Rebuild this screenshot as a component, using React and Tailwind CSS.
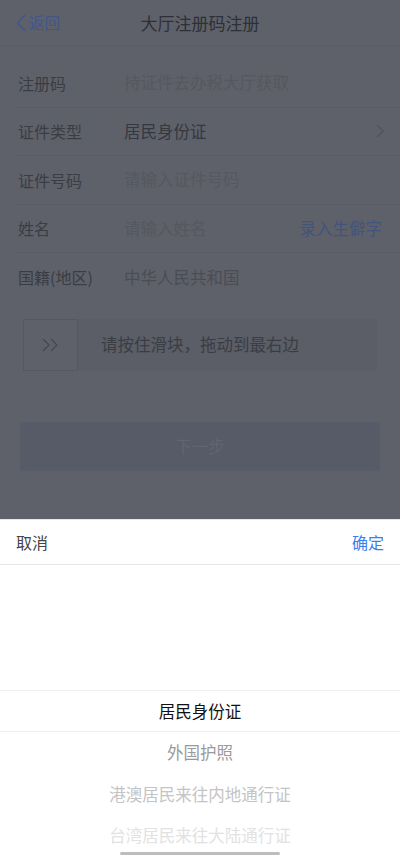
import React from "react";

const FONT = { fontFamily: '"Noto Sans CJK SC", "Noto Sans", sans-serif' };

const ROWS = [
  { label: "注册码", placeholder: "持证件去办税大厅获取" },
  { label: "证件类型", value: "居民身份证", arrow: true },
  { label: "证件号码", placeholder: "请输入证件号码" },
  { label: "姓名", placeholder: "请输入姓名", action: "录入生僻字" },
  { label: "国籍(地区)", value: "中华人民共和国", muted: true },
];

const OPTIONS = [
  { text: "外国护照", className: "text-[#9a9a9a]" },
  { text: "港澳居民来往内地通行证", className: "text-[#c4c4c4]" },
  { text: "台湾居民来往大陆通行证", className: "text-[#e2e2e2]" },
];

function FormRow({ row }) {
  return (
    <div className="flex items-center h-[48.5px] ml-4 pr-[18px] border-b border-[#585b63] last:border-b-0">
      <div className="w-[108px] pl-[2px] text-[16px] text-[#3a3d44]">{row.label}</div>
      <div
        className={`flex-1 text-[16.5px] ${
          row.placeholder ? "text-[#55585f]" : row.muted ? "text-[#4a4d54]" : "text-[#35383f]"
        }`}
      >
        {row.placeholder || row.value}
      </div>
      {row.action && <div className="text-[16.5px] text-[#43547c]">{row.action}</div>}
      {row.arrow && (
        <svg width="8" height="14" viewBox="0 0 8 14" className="mr-[-2px]">
          <path d="M1 1l6 6-6 6" fill="none" stroke="#50535b" strokeWidth="1.4" />
        </svg>
      )}
    </div>
  );
}

export default function App() {
  return (
    <div className="w-[400px] h-[856px] flex flex-col overflow-hidden bg-white" style={FONT}>
      {/* dimmed page behind the sheet */}
      <div className="h-[519px] shrink-0 bg-[#5e616a] flex flex-col">
        <div className="relative h-[46px] flex items-center justify-center border-b border-[#595c64]">
          <div className="absolute left-[16px] top-0 h-full flex items-center gap-[3px] text-[#42568a]">
            <svg width="10" height="18" viewBox="0 0 10 18">
              <path d="M9 1L1.5 9 9 17" fill="none" stroke="#42568a" strokeWidth="1.6" />
            </svg>
            <span className="text-[15.5px]">返回</span>
          </div>
          <div className="text-[17px] text-[#2d3036]">大厅注册码注册</div>
        </div>

        <div className="mt-[13px]">
          {ROWS.map((row) => (
            <FormRow key={row.label} row={row} />
          ))}
        </div>

        <div className="mx-[23px] mt-[17px] h-[52px] flex items-center bg-[#5b5e66]">
          <div className="w-[55px] h-full flex items-center justify-center border border-[#555860] bg-[#5e616a]">
            <svg width="20" height="14" viewBox="0 0 20 14">
              <path d="M2 1l6 6-6 6M10 1l6 6-6 6" fill="none" stroke="#44474e" strokeWidth="1.2" />
            </svg>
          </div>
          <div className="ml-[23px] text-[16.5px] text-[#3a3d44]">请按住滑块，拖动到最右边</div>
        </div>

        <div className="mx-[20px] mt-[51px] h-[49px] rounded-[4px] bg-[#565b67] flex items-center justify-center">
          <span className="text-[16.5px] text-[#60656f]">下一步</span>
        </div>
      </div>

      {/* bottom picker sheet */}
      <div className="relative flex-1 min-h-0 flex flex-col bg-white border-t border-[#e3e5ea]">
        <div className="h-[45px] shrink-0 flex items-center justify-between px-4 border-b border-[#e6e6e6]">
          <span className="text-[16px] text-[#444]">取消</span>
          <span className="text-[16px] text-[#3c7ef0]">确定</span>
        </div>
        <div className="h-[125px] shrink-0" />
        <div className="h-[42px] shrink-0 flex items-center justify-center border-t border-b border-[#eeeeee]">
          <span className="text-[16.5px] text-[#111]">居民身份证</span>
        </div>
        {OPTIONS.map((opt) => (
          <div key={opt.text} className="h-[41.5px] shrink-0 flex items-center justify-center">
            <span className={`text-[16.5px] ${opt.className}`}>{opt.text}</span>
          </div>
        ))}
        {/* home indicator */}
        <div className="absolute bottom-[1px] left-[120px] w-[160px] h-[3px] rounded-full bg-[#bdbdbd]" />
      </div>
    </div>
  );
}
